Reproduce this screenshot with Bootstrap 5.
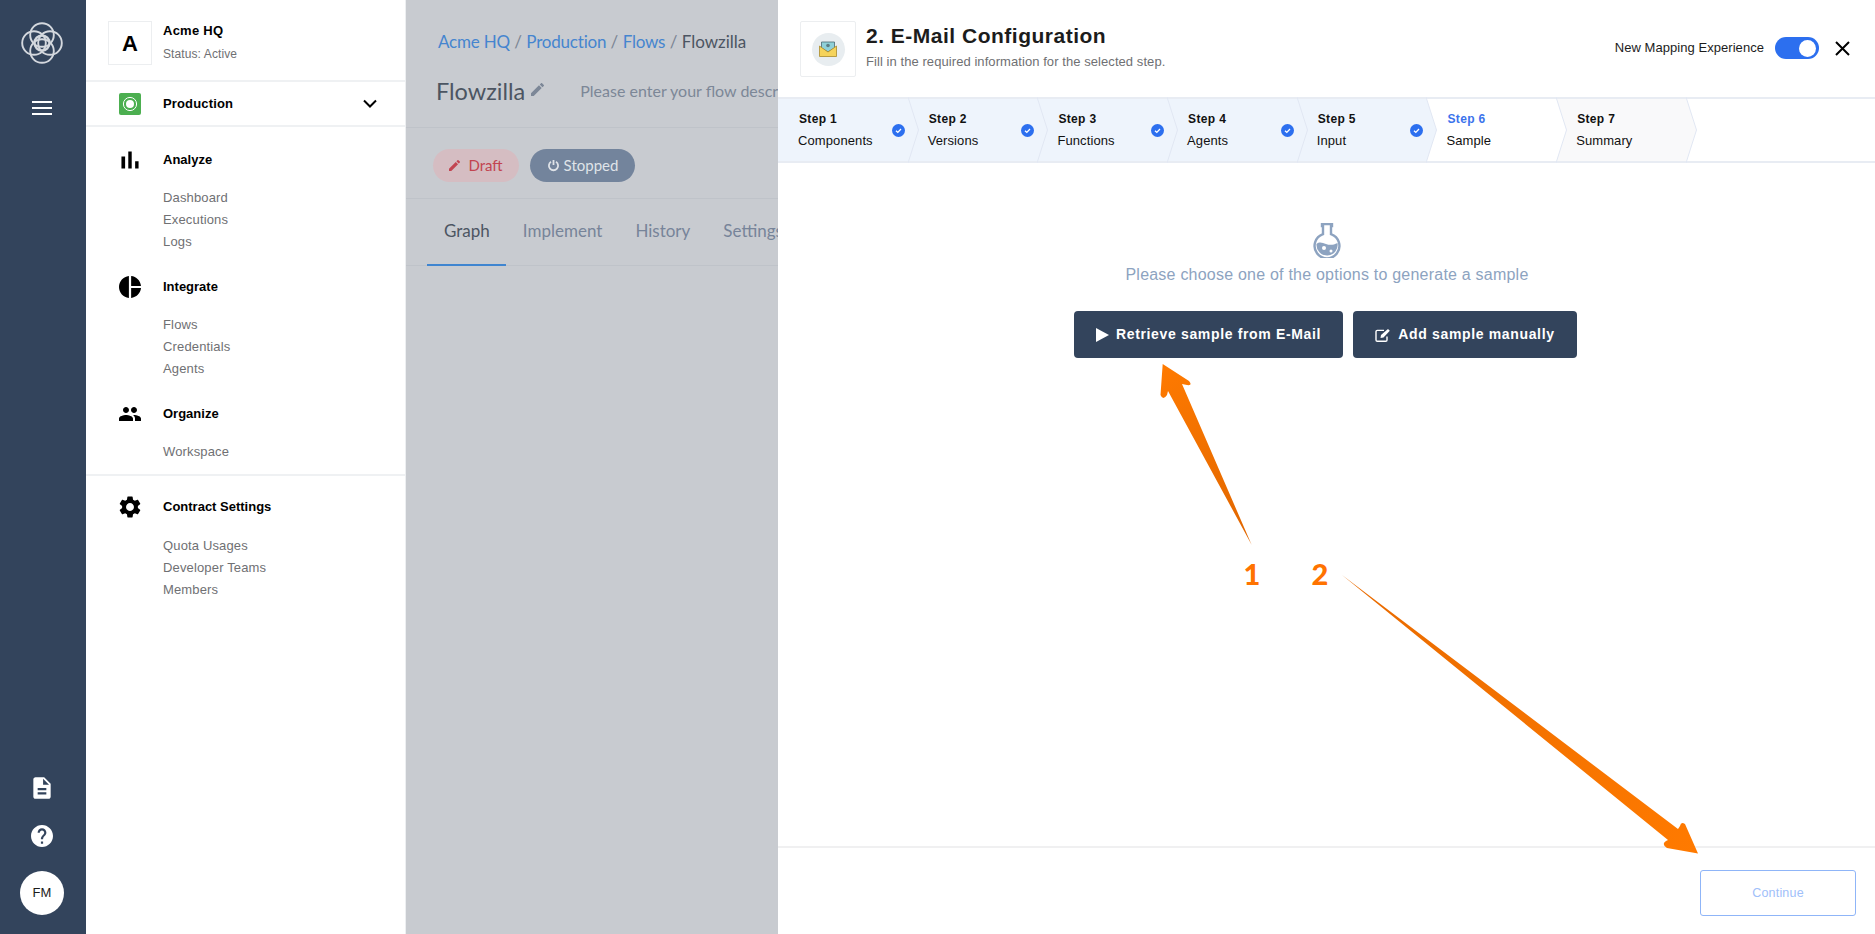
<!DOCTYPE html>
<html lang="en"><head><meta charset="utf-8"><title>Flowzilla</title>
<link href="https://cdn.jsdelivr.net/npm/bootstrap@5.3.0/dist/css/bootstrap.min.css" rel="stylesheet">
<style>
html,body{height:934px;overflow:hidden}
body{font-family:"Liberation Sans",Arial,sans-serif;background:#fff;color:#000;position:relative}
.shell{height:934px}
.rail{width:86px;background:#33445c;padding:22px 2px 19px 0;flex:none}
.rail-logo{width:42px;height:42px}
.rail-burger{width:20px;height:14px;margin-top:37px;border-top:2px solid #fff;border-bottom:2px solid #fff}
.rail-burger::after{content:"";display:block;height:2px;background:#fff;margin-top:4px}
.rail-doc{width:26px;height:26px;margin-bottom:24px}
.rail-help{width:22px;height:22px;margin-bottom:24px}
.avatar{width:44px;height:44px;background:#fff;color:#1c1c1c;font-size:13px;letter-spacing:.2px}
.side{width:320px;border-right:1px solid #edeff1;flex:none}
.org{height:82px;border-bottom:2px solid #eff1f3;padding:21px 0 0 22px}
.org-box{width:44px;height:44px;border:1px solid #eceef0;font-size:22px;font-weight:700;margin-right:11px}
.org-name{font-size:13px;line-height:20px;letter-spacing:.25px;font-weight:700}
.org-stat{font-size:12px;line-height:20px;margin-top:3px;color:#6f7073;letter-spacing:.1px}
.env{height:45px;border-bottom:2px solid #eff1f3;padding:0 28px 0 33px}
.env-dot{width:22px;height:22px;background:#4caf50;border-radius:2px;margin-right:22px}
.env-name{font-size:13px;font-weight:700;letter-spacing:.15px}
.nav-sec{padding:22.5px 0 0 33px}
.nav-sec.first{padding-top:21.5px}
.nav-sec.split{border-bottom:2px solid #eff1f3;padding-bottom:10.5px}
.nav-sec.tight{padding-top:20.5px}
.nav-head{height:22px;font-size:13px;line-height:22px;font-weight:700;margin-bottom:16.5px}
.nav-ico{width:22px;height:22px;margin-right:22px;flex:none}
.nav-sub{padding-left:44px;font-size:13px;line-height:22px;color:#6f7073;letter-spacing:.15px}
.bgpane{width:372px;background:#c8cbd0;overflow:hidden;flex:none;font-family:Lato,sans-serif}
.crumbs{height:128px;border-bottom:1px solid #bfc3c9;padding:29px 0 0 32px;white-space:nowrap}
.crumb-line{font-size:17px;line-height:26px;color:#7b8594}
.crumb-line a{color:#4585cf;text-decoration:none;letter-spacing:-.2px}
.crumb-line span{color:#4c5562}
.flow-title{font-size:23.5px;line-height:30px;color:#4c5562;margin:21px 0 0 -2px}
.flow-pen{width:13px;height:13px;margin:-4px 0 0 6px;flex:none}
.flow-desc{font-size:16px;color:#7c8797;margin-left:36px;flex:none}
.statuses{height:71px;border-bottom:1px solid #bfc3c9;padding:21px 0 0 27px}
.pill{height:33px;border-radius:17px;font-size:15px}
.pill-draft{width:86px;background:#d5bdc2;color:#c24450;margin-right:11px}
.pill-stop{width:105px;background:#73849c;color:#dfe3e8}
.tabsrow{height:67px;border-bottom:1px solid #bfc3c9;padding-left:21px;white-space:nowrap;font-size:17px;color:#778499}
.tabitem{height:67px;line-height:64px;padding:0 16px 0 17px}
.tabitem.on{color:#4c5562;border-bottom:2px solid #3f85d0}
.panel{flex:1 1 auto;min-width:0}
.phead{height:97px;padding:21px 0 0 22px}
.mail-box{width:56px;height:56px;border:1px solid #eceef0;border-radius:2px;margin-right:10px}
.mail-circle{width:33px;height:33px;background:#e8edf0}
.ptitle{font-size:21px;line-height:28px;font-weight:700;color:#1c1c1c;margin-top:1px;letter-spacing:.5px}
.psub{font-size:13px;line-height:20px;color:#6f7073;letter-spacing:.07px;margin-top:2px}
.mapping{height:22px;margin-top:16px;font-size:13px;letter-spacing:.05px;color:#1c1c1c;padding-right:25px}
.switch{width:44px;height:22px;background:#2c6fef;border-radius:11px;margin-left:11px;padding:0 3px}
.knob{width:17px;height:17px;background:#fff;border-radius:50%}
.xbtn{width:15px;height:15px;margin-left:16px}
.steps{height:66px;border-top:2px solid #e8ecf3;border-bottom:2px solid #e8ecf3}
.stp{height:100%;width:129.7px;position:relative;padding:0 0 0 20px;font-size:13px;color:#111;flex:none}
.stp-done{background:#eef4fc}
.stp-cur{background:#fff}
.stp-next{background:#f9f9fa}
.stp-b{font-size:12px;font-weight:700;line-height:22px;margin-top:9px;letter-spacing:.35px;padding-left:1px}
.stp-t{line-height:22px;letter-spacing:.1px}
.stp-cur .stp-b{color:#3b73ec}
.stp-edge{position:absolute;left:100%;top:-2px;width:11px;height:66px;z-index:2}
.stp-check{position:absolute;right:3px;top:25px;width:13px;height:13px}
.pbody{flex:1 1 auto;padding-top:60px}
.flask{width:28px;height:35px}
.hint{font-size:16px;line-height:24px;color:#8da3c0;margin:5px 0 0 1px;letter-spacing:.22px}
.act{height:47px;background:#33445c;color:#fff;font-size:14px;font-weight:700;border:0;border-radius:4px;letter-spacing:.65px}
.act:hover{background:#33445c;color:#fff}
.act-a{width:269px;margin-right:10px}
.act-b{width:224px}
.act svg{margin-right:7px}
.actions{margin:24px 2px 0 0}
.pfoot{height:88px;border-top:2px solid #f0f0f1;padding:22px 19px 0 0}
.cont{width:156px;height:46px;border:1px solid #8fb5f8;border-radius:3px;color:#a0c0fa;font-size:12.5px;background:#fff;letter-spacing:.2px}
.marks{position:absolute;left:0;top:0;width:1875px;height:934px;pointer-events:none;z-index:5}
.marks text{font-family:Lato,sans-serif;font-weight:900;font-size:29px;fill:#ff7300}
</style></head>
<body>
<div class="shell d-flex">
  <aside class="rail d-flex flex-column align-items-center">
    <svg class="rail-logo" viewBox="0 0 42 42" fill="none" stroke="#d4d8de" stroke-width="1.9"><circle cx="21" cy="13" r="11.8"/><circle cx="21" cy="29" r="11.8"/><circle cx="13" cy="21" r="11.8"/><circle cx="29" cy="21" r="11.800"/><circle cx="21" cy="21" r="7.500" stroke-width="2.400"/></svg>
    <div class="rail-burger"></div>
    <div class="mt-auto d-flex flex-column align-items-center">
      <svg class="rail-doc" viewBox="0 0 24 24" fill="#fff"><path d="M14 2H6c-1.1 0-1.99.9-1.99 2L4 20c0 1.1.89 2 1.99 2H18c1.1 0 2-.9 2-2V8l-6-6zm2 16H8v-2h8v2zm0-4H8v-2h8v2zm-3-5V3.5L18.5 9H13z"/></svg>
      <svg class="rail-help" viewBox="2 2 20 20" fill="#fff"><path d="M12 2C6.48 2 2 6.48 2 12s4.48 10 10 10 10-4.48 10-10S17.52 2 12 2zm1 17h-2v-2h2v2zm2.07-7.75l-.9.92C13.45 12.9 13 13.5 13 15h-2v-.5c0-1.1.45-2.1 1.17-2.83l1.24-1.26c.37-.36.59-.86.59-1.41 0-1.1-.9-2-2-2s-2 .9-2 2H8c0-2.21 1.79-4 4-4s4 1.79 4 4c0 .88-.36 1.68-.93 2.25z"/></svg>
      <div class="avatar rounded-circle d-flex align-items-center justify-content-center">FM</div>
    </div>
  </aside>

  <nav class="side">
    <div class="org d-flex">
      <div class="org-box d-flex align-items-center justify-content-center">A</div>
      <div><div class="org-name">Acme HQ</div><div class="org-stat">Status: Active</div></div>
    </div>
    <div class="env d-flex align-items-center">
      <div class="env-dot d-flex align-items-center justify-content-center"><svg width="16" height="16" viewBox="0 0 16 16"><circle cx="8" cy="8" r="6.6" fill="none" stroke="#fff" stroke-width="1"/><circle cx="8" cy="8" r="4" fill="#fff"/></svg></div>
      <div class="env-name">Production</div>
      <svg class="ms-auto" width="14" height="9" viewBox="0 0 14 9" fill="none" stroke="#000" stroke-width="2"><path d="M1 1.5l6 6 6-6"/></svg>
    </div>
    <div class="nav-sec first">
      <div class="nav-head d-flex"><svg class="nav-ico" viewBox="3 3 18 18"><path d="M5 9.2h3V19H5zM10.6 5h2.8v14h-2.8zm5.6 8H19v6h-2.8z"/></svg>Analyze</div>
      <div class="nav-sub">Dashboard<br>Executions<br>Logs</div>
    </div>
    <div class="nav-sec">
      <div class="nav-head d-flex"><svg class="nav-ico" viewBox="2 2 20 20"><path d="M11 2v20c-5.07-.5-9-4.79-9-10s3.93-9.5 9-10zm2.03 0v8.99H22c-.47-4.74-4.24-8.52-8.97-8.99zm0 11.01V22c4.74-.47 8.5-4.25 8.97-8.99h-8.97z"/></svg>Integrate</div>
      <div class="nav-sub">Flows<br>Credentials<br>Agents</div>
    </div>
    <div class="nav-sec split">
      <div class="nav-head d-flex"><svg class="nav-ico" viewBox="1 1 22 22"><path d="M16 11c1.66 0 2.99-1.34 2.99-3S17.66 5 16 5c-1.66 0-3 1.34-3 3s1.34 3 3 3zm-8 0c1.66 0 2.99-1.34 2.99-3S9.66 5 8 5C6.34 5 5 6.34 5 8s1.34 3 3 3zm0 2c-2.33 0-7 1.17-7 3.5V19h14v-2.5c0-2.33-4.67-3.5-7-3.5zm8 0c-.29 0-.62.02-.97.05 1.16.84 1.97 1.97 1.97 3.45V19h6v-2.5c0-2.33-4.67-3.5-7-3.5z"/></svg>Organize</div>
      <div class="nav-sub">Workspace</div>
    </div>
    <div class="nav-sec tight">
      <div class="nav-head d-flex"><svg class="nav-ico" viewBox="2 2 20 20"><path d="M19.14 12.94c.04-.3.06-.61.06-.94 0-.32-.02-.64-.07-.94l2.03-1.58c.18-.14.23-.41.12-.61l-1.92-3.32c-.12-.22-.37-.29-.59-.22l-2.39.96c-.5-.38-1.03-.7-1.62-.94l-.36-2.54c-.04-.24-.24-.41-.48-.41h-3.84c-.24 0-.43.17-.47.41l-.36 2.54c-.59.24-1.13.57-1.62.94l-2.39-.96c-.22-.08-.47 0-.59.22L2.74 8.87c-.12.21-.08.47.12.61l2.03 1.58c-.05.3-.09.63-.09.94s.02.64.07.94l-2.03 1.58c-.18.14-.23.41-.12.61l1.92 3.32c.12.22.37.29.59.22l2.39-.96c.5.38 1.03.7 1.62.94l.36 2.54c.05.24.24.41.48.41h3.84c.24 0 .44-.17.47-.41l.36-2.54c.59-.24 1.13-.56 1.62-.94l2.39.96c.22.08.47 0 .59-.22l1.92-3.32c.12-.22.07-.47-.12-.61l-2.01-1.58zM12 15.6c-1.98 0-3.6-1.62-3.6-3.6s1.62-3.6 3.6-3.6 3.6 1.62 3.6 3.6-1.62 3.6-3.6 3.6z"/></svg>Contract Settings</div>
      <div class="nav-sub">Quota Usages<br>Developer Teams<br>Members</div>
    </div>
  </nav>

  <div class="bgpane">
    <div class="crumbs">
      <div class="crumb-line"><a href="#">Acme HQ</a> / <a href="#">Production</a> / <a href="#">Flows</a> / <span>Flowzilla</span></div>
      <div class="d-flex align-items-center flow-title">Flowzilla
        <svg class="flow-pen" viewBox="3 3 18 18" fill="#7c8797"><path d="M3 17.25V21h3.75L17.81 9.94l-3.75-3.75L3 17.25zM20.71 7.04c.39-.39.39-1.02 0-1.41l-2.34-2.34c-.39-.39-1.02-.39-1.41 0l-1.83 1.83 3.75 3.75 1.83-1.83z"/></svg>
        <span class="flow-desc">Please enter your flow description</span></div>
    </div>
    <div class="statuses d-flex">
      <div class="pill pill-draft d-flex align-items-center justify-content-center gap-2"><svg width="11" height="11" viewBox="3 3 18 18" fill="#c24450"><path d="M3 17.25V21h3.75L17.81 9.94l-3.75-3.75L3 17.25zM20.71 7.04c.39-.39.39-1.02 0-1.41l-2.34-2.34c-.39-.39-1.02-.39-1.41 0l-1.83 1.83 3.75 3.75 1.83-1.83z"/></svg>Draft</div>
      <div class="pill pill-stop d-flex align-items-center justify-content-center gap-1"><svg width="13" height="13" viewBox="0 0 13 13" fill="none" stroke="#dfe3e8" stroke-width="1.8"><path d="M4 2.8a4.6 4.6 0 1 0 5 0M6.5 1v5"/></svg>Stopped</div>
    </div>
    <div class="tabsrow d-flex">
      <div class="tabitem on">Graph</div><div class="tabitem">Implement</div><div class="tabitem">History</div><div class="tabitem">Settings</div>
    </div>
  </div>

  <main class="panel d-flex flex-column">
    <header class="phead d-flex">
      <div class="mail-box d-flex align-items-center justify-content-center">
        <div class="mail-circle rounded-circle d-flex align-items-center justify-content-center">
          <svg width="18" height="16" viewBox="0 0 18 16"><path d="M2.500 7V1h13v6L9 11z" fill="#8fd0d8" stroke="#4a6a72" stroke-width=".8"/><circle cx="9" cy="4.500" r="1.800" fill="#5d7d84"/><path d="M.5 5l8.500 6 8.500-6v10.500H.5z" fill="#f5d35b" stroke="#a98a2b" stroke-width=".8"/></svg>
        </div>
      </div>
      <div><div class="ptitle">2. E-Mail Configuration</div><div class="psub">Fill in the required information for the selected step.</div></div>
      <div class="ms-auto d-flex align-items-center mapping">
        New Mapping Experience
        <div class="switch d-flex align-items-center justify-content-end"><div class="knob"></div></div>
        <svg class="xbtn" viewBox="0 0 15 15" stroke="#000" stroke-width="2"><path d="M1 1l13 13M14 1L1 14"/></svg>
      </div>
    </header>
    <div class="steps d-flex">
      <div class="stp stp-done"><div class="stp-b">Step 1</div><div class="stp-t">Components</div><svg class="stp-check" viewBox="0 0 13 13"><circle cx="6.5" cy="6.5" r="6.5" fill="#2c6fef"/><path d="M4 6.7l1.8 1.7L9 5" fill="none" stroke="#fff" stroke-width="1.3"/></svg><svg class="stp-edge" viewBox="0 0 11 66"><path d="M0 0l10.5 33L0 66z" fill="#eef4fc"/><path d="M0 0l10.5 33L0 66" fill="none" stroke="#e1e7f3"/></svg></div>
      <div class="stp stp-done"><div class="stp-b">Step 2</div><div class="stp-t">Versions</div><svg class="stp-check" viewBox="0 0 13 13"><circle cx="6.5" cy="6.5" r="6.5" fill="#2c6fef"/><path d="M4 6.7l1.8 1.7L9 5" fill="none" stroke="#fff" stroke-width="1.3"/></svg><svg class="stp-edge" viewBox="0 0 11 66"><path d="M0 0l10.5 33L0 66z" fill="#eef4fc"/><path d="M0 0l10.5 33L0 66" fill="none" stroke="#e1e7f3"/></svg></div>
      <div class="stp stp-done"><div class="stp-b">Step 3</div><div class="stp-t">Functions</div><svg class="stp-check" viewBox="0 0 13 13"><circle cx="6.5" cy="6.5" r="6.5" fill="#2c6fef"/><path d="M4 6.7l1.8 1.7L9 5" fill="none" stroke="#fff" stroke-width="1.3"/></svg><svg class="stp-edge" viewBox="0 0 11 66"><path d="M0 0l10.5 33L0 66z" fill="#eef4fc"/><path d="M0 0l10.5 33L0 66" fill="none" stroke="#e1e7f3"/></svg></div>
      <div class="stp stp-done"><div class="stp-b">Step 4</div><div class="stp-t">Agents</div><svg class="stp-check" viewBox="0 0 13 13"><circle cx="6.5" cy="6.5" r="6.5" fill="#2c6fef"/><path d="M4 6.7l1.8 1.7L9 5" fill="none" stroke="#fff" stroke-width="1.3"/></svg><svg class="stp-edge" viewBox="0 0 11 66"><path d="M0 0l10.5 33L0 66z" fill="#eef4fc"/><path d="M0 0l10.5 33L0 66" fill="none" stroke="#e1e7f3"/></svg></div>
      <div class="stp stp-done"><div class="stp-b">Step 5</div><div class="stp-t">Input</div><svg class="stp-check" viewBox="0 0 13 13"><circle cx="6.5" cy="6.5" r="6.5" fill="#2c6fef"/><path d="M4 6.7l1.8 1.7L9 5" fill="none" stroke="#fff" stroke-width="1.3"/></svg><svg class="stp-edge" viewBox="0 0 11 66"><path d="M0 0l10.5 33L0 66z" fill="#eef4fc"/><path d="M0 0l10.5 33L0 66" fill="none" stroke="#e1e7f3"/></svg></div>
      <div class="stp stp-cur"><div class="stp-b">Step 6</div><div class="stp-t">Sample</div><svg class="stp-edge" viewBox="0 0 11 66"><path d="M0 0l10.5 33L0 66z" fill="#fff"/><path d="M0 0l10.5 33L0 66" fill="none" stroke="#e1e7f3"/></svg></div>
      <div class="stp stp-next"><div class="stp-b">Step 7</div><div class="stp-t">Summary</div><svg class="stp-edge" viewBox="0 0 11 66"><path d="M0 0l10.5 33L0 66z" fill="#f9f9fa"/><path d="M0 0l10.5 33L0 66" fill="none" stroke="#e1e7f3"/></svg></div>
    </div>
    <section class="pbody text-center d-flex flex-column align-items-center">
      <svg class="flask" viewBox="0 0 28 35"><path d="M9 1h10v2h-1v8.2a12.4 12.4 0 1 1-8 0V3H9z" fill="none" stroke="#8da3c0" stroke-width="2.4"/><path d="M3.5 21c3-2.6 6-1.2 9.500 0 3.500 1.200 7 1.400 11.500-1a10.600 10.600 0 1 1-21 1z" fill="#8da3c0"/><circle cx="11" cy="25" r="2" fill="#fff"/><circle cx="18" cy="28" r="1.500" fill="#fff"/></svg>
      <div class="hint">Please choose one of the options to generate a sample</div>
      <div class="actions d-flex">
        <button class="btn act act-a d-flex align-items-center justify-content-center" type="button"><svg width="13" height="14" viewBox="0 0 13 14" fill="#fff"><path d="M0 0l13 7-13 7z"/></svg>Retrieve sample from E-Mail</button>
        <button class="btn act act-b d-flex align-items-center justify-content-center" type="button"><svg width="16" height="14" viewBox="0 0 16 14" fill="none" stroke="#fff" stroke-width="1.400"><path d="M12 8.500V12a1.300 1.300 0 0 1-1.300 1.300H2.300A1.300 1.300 0 0 1 1 12V3.700a1.300 1.300 0 0 1 1.300-1.300H9"/><path d="M6 7l7-6 1.800 1.800-6.300 6.700-3 .5z" fill="#fff" stroke="none"/></svg>Add sample manually</button>
      </div>
    </section>
    <footer class="pfoot d-flex justify-content-end">
      <button class="cont" type="button" disabled>Continue</button>
    </footer>
  </main>
</div>
<svg class="marks" viewBox="0 0 1875 934">
  <defs>
    <linearGradient id="ga" x1="1160" y1="364" x2="1251" y2="545" gradientUnits="userSpaceOnUse"><stop offset="0" stop-color="#ff7a00"/><stop offset="1" stop-color="#e06600"/></linearGradient>
    <linearGradient id="gb" x1="1342" y1="575" x2="1698" y2="853" gradientUnits="userSpaceOnUse"><stop offset="0" stop-color="#e86a00"/><stop offset="1" stop-color="#ff7a00"/></linearGradient>
  </defs>
  <path d="M1251.700 545L1168 391 1167 395Q1163 401 1160.500 395L1162.700 364 1189 381Q1193 386 1187 385L1182 384z" fill="url(#ga)"/>
  <path d="M1342 575L1678 829 1680 826Q1681 821 1685 824L1698 853.500 1667 848Q1661 844 1666 841L1668 840z" fill="url(#gb)"/>
  <text x="1252" y="585" text-anchor="middle">1</text>
  <text x="1320" y="585" text-anchor="middle">2</text>
</svg>
<script src="https://cdn.jsdelivr.net/npm/bootstrap@5.3.0/dist/js/bootstrap.bundle.min.js"></script>
</body></html>
